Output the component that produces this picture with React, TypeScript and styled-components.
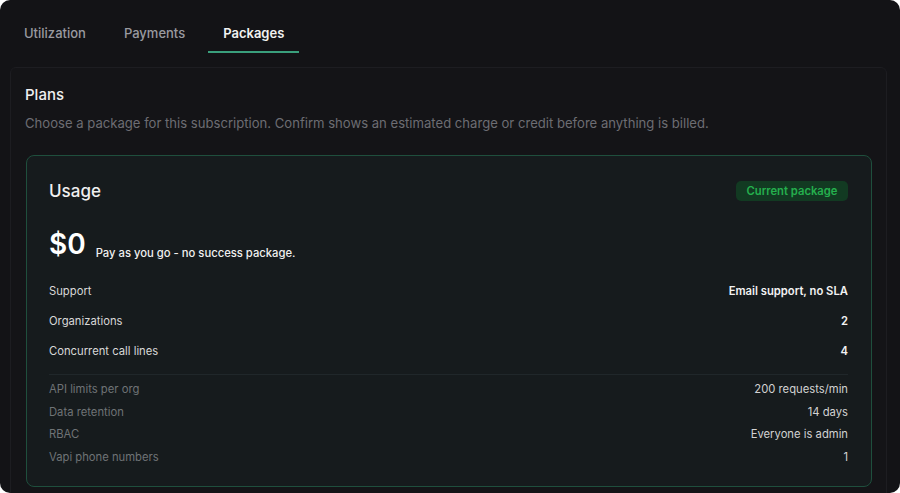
import React from 'react'
import styled, { createGlobalStyle } from 'styled-components'

const GlobalStyle = createGlobalStyle`
  html, body {
    margin: 0;
    padding: 0;
    background: #ffffff;
  }

  body {
    font-family: Inter, 'Noto Sans', 'Liberation Sans', sans-serif;
    -webkit-font-smoothing: antialiased;
  }

  * {
    box-sizing: border-box;
  }
`

const StyledWindow = styled.div`
  background-color: #131316;
  border-radius: 10px;
  height: 493px;
  overflow: hidden;
  width: 900px;
`

const StyledTabBar = styled.div`
  display: flex;
  gap: 8px;
  padding-left: 9px;
`

const StyledTab = styled.div<{ active?: boolean }>`
  align-items: center;
  border-bottom: 2px solid ${props => (props.active ? '#3a9f7c' : 'transparent')};
  color: ${props => (props.active ? '#f2f2f2' : '#9a9aa0')};
  display: flex;
  font-size: 13px;
  font-weight: ${props => (props.active ? 600 : 500)};
  height: 53px;
  padding: 14px 15px 0;
`

const StyledPanel = styled.section`
  background-color: #141417;
  border: 1px solid #1d1d21;
  border-radius: 6px;
  margin: 14px 13px 0 10px;
  padding: 17px 14px 20px;
`

const StyledPanelTitle = styled.h2`
  color: #f0f0f0;
  font-size: 15px;
  font-weight: 500;
  line-height: 20px;
  margin: 0;
`

const StyledPanelText = styled.p`
  color: #6d6d73;
  font-size: 13.1px;
  line-height: 20px;
  margin: 8px 0 22px;
`

const StyledCard = styled.div`
  background-color: #161b1d;
  border: 1px solid #1f4f3d;
  border-radius: 8px;
  display: flex;
  flex-direction: column;
  margin-left: 1px;
  padding: 22px 23px 21px 22px;
`

const StyledCardHeader = styled.div`
  align-items: center;
  display: flex;
  height: 24px;
  justify-content: space-between;
  position: relative;
  top: 1px;
`

const StyledCardTitle = styled.h3`
  color: #f0f0f0;
  font-size: 17px;
  font-weight: 500;
  margin: 0;
`

const StyledBadge = styled.span`
  background-color: #123a22;
  border-radius: 5px;
  color: #25b04e;
  font-size: 11.25px;
  font-weight: 600;
  line-height: 20px;
  padding: 0 10.5px;
`

const StyledPrice = styled.div`
  align-items: baseline;
  display: flex;
  gap: 10px;
  height: 36px;
  margin: 24px 0 21px;
`

const StyledAmount = styled.span`
  color: #ffffff;
  font-size: 28px;
  font-weight: 600;
  line-height: 36px;
`

const StyledAmountNote = styled.span`
  color: #f0f0f0;
  font-size: 11.25px;
  font-weight: 500;
  position: relative;
  top: 3px;
`

const StyledRows = styled.div<{ gap: number }>`
  display: flex;
  flex-direction: column;
  gap: ${props => props.gap}px;
`

const StyledRow = styled.div<{ muted?: boolean }>`
  display: flex;
  font-size: 11.25px;
  justify-content: space-between;
  line-height: 16px;

  span:first-child {
    color: ${props => (props.muted ? '#6f7376' : '#d8d8d8')};
  }

  span:last-child {
    color: ${props => (props.muted ? '#d2d2d2' : '#f2f2f2')};
    font-weight: ${props => (props.muted ? 400 : 600)};
  }
`

const StyledDivider = styled.div`
  background-color: #20272a;
  height: 1px;
  margin: 15px 0 6px;
`

const mainRows = [
  ['Support', 'Email support, no SLA'],
  ['Organizations', '2'],
  ['Concurrent call lines', '4'],
]

const detailRows = [
  ['API limits per org', '200 requests/min'],
  ['Data retention', '14 days'],
  ['RBAC', 'Everyone is admin'],
  ['Vapi phone numbers', '1'],
]

const App = () => {
  return (
    <>
      <GlobalStyle />
      <StyledWindow>
        <StyledTabBar>
          <StyledTab>Utilization</StyledTab>
          <StyledTab>Payments</StyledTab>
          <StyledTab active>Packages</StyledTab>
        </StyledTabBar>

        <StyledPanel>
          <StyledPanelTitle>Plans</StyledPanelTitle>
          <StyledPanelText>
            Choose a package for this subscription. Confirm shows an estimated charge or credit before anything is
            billed.
          </StyledPanelText>

          <StyledCard>
            <StyledCardHeader>
              <StyledCardTitle>Usage</StyledCardTitle>
              <StyledBadge>Current package</StyledBadge>
            </StyledCardHeader>
            <StyledPrice>
              <StyledAmount>$0</StyledAmount>
              <StyledAmountNote>Pay as you go - no success package.</StyledAmountNote>
            </StyledPrice>
            <StyledRows gap={14}>
              {mainRows.map(([label, value]) => (
                <StyledRow key={label}>
                  <span>{label}</span>
                  <span>{value}</span>
                </StyledRow>
              ))}
            </StyledRows>
            <StyledDivider />
            <StyledRows gap={6.5}>
              {detailRows.map(([label, value]) => (
                <StyledRow key={label} muted>
                  <span>{label}</span>
                  <span>{value}</span>
                </StyledRow>
              ))}
            </StyledRows>
          </StyledCard>
        </StyledPanel>
      </StyledWindow>
    </>
  )
}

export default App
